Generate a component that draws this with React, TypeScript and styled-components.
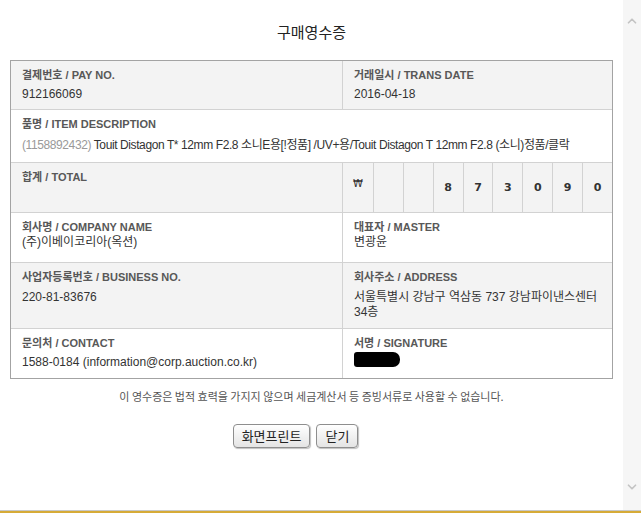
import React from 'react';
import styled, { createGlobalStyle } from 'styled-components';
import { ChevronUp, ChevronDown } from 'lucide-react';

const GlobalStyle = createGlobalStyle`
  html, body {
    margin: 0;
    padding: 0;
    background: #fff;
  }
  body {
    font-family: "Liberation Sans", "Noto Sans CJK KR", sans-serif;
    color: #333;
  }
`;

const Frame = styled.div`
  width: 641px;
  height: 513px;
  display: flex;
  flex-direction: column;
  overflow: hidden;
`;

const Viewport = styled.div`
  flex: 1;
  display: flex;
  min-height: 0;
`;

const Content = styled.main`
  width: 623px;
  padding: 22px 10px 0 10px;
  box-sizing: border-box;
`;

const Title = styled.h1`
  margin: 0 0 18px;
  font-size: 15px;
  line-height: 20px;
  font-weight: normal;
  text-align: center;
  color: #222;
  font-family: "Noto Sans CJK KR", sans-serif;
`;

const Receipt = styled.section`
  border: 1px solid #a3a3a3;
`;

const Row = styled.div<{ $shaded?: boolean; $h: number }>`
  display: grid;
  grid-template-columns: 332px 1fr;
  height: ${({ $h }) => $h}px;
  background: ${({ $shaded }) => ($shaded ? '#f3f3f3' : '#fff')};
  & + & {
    border-top: 1px solid #d2d2d2;
  }
  & > *:first-child {
    border-right: 1px solid #d2d2d2;
  }
`;

const Cell = styled.div<{ $wide?: boolean }>`
  padding: 6px 11px;
  box-sizing: border-box;
  min-width: 0;
  ${({ $wide }) => $wide && 'grid-column: 1 / -1; border-right: none !important;'}
`;

const Label = styled.div`
  font-size: 11px;
  line-height: 16px;
  font-weight: bold;
  color: #585858;
  white-space: nowrap;
`;

const Value = styled.div<{ $gap?: number }>`
  margin-top: ${({ $gap }) => $gap ?? 4}px;
  font-size: 12px;
  line-height: 15px;
  color: #333;
  white-space: nowrap;
`;

const ItemText = styled(Value)`
  letter-spacing: -0.4px;
`;

const ItemCode = styled.span`
  color: #999;
`;

const AmountGrid = styled.div`
  display: grid;
  grid-template-columns: repeat(9, 1fr);
`;

const AmountCell = styled.div<{ $currency?: boolean }>`
  display: flex;
  align-items: center;
  justify-content: center;
  font-family: "DejaVu Sans", sans-serif;
  font-size: ${({ $currency }) => ($currency ? '10px' : '11px')};
  font-weight: ${({ $currency }) => ($currency ? 'normal' : 'bold')};
  color: #333;
  padding-bottom: ${({ $currency }) => ($currency ? '8px' : '0')};
  & + & {
    border-left: 1px solid #d2d2d2;
  }
`;

const Redacted = styled.div`
  margin-top: 1px;
  width: 46px;
  height: 15px;
  background: #000;
  border-radius: 3px 7px 7px 3px;
`;

const Notice = styled.p`
  margin: 10px 0 0;
  font-size: 11px;
  line-height: 14px;
  text-align: center;
  color: #555;
  font-family: "Noto Sans CJK KR", sans-serif;
`;

const ButtonBar = styled.div`
  display: flex;
  justify-content: center;
  gap: 6px;
  margin-top: 21px;
  padding-right: 32px;
`;

const Button = styled.button`
  height: 24px;
  padding: 0 8px;
  border: 1px solid #8e8e8e;
  border-radius: 4px;
  background: linear-gradient(#ffffff, #e4e4e4);
  box-shadow: 1px 1px 1px rgba(0, 0, 0, 0.25);
  font-family: "Noto Sans CJK KR", sans-serif;
  font-size: 13px;
  line-height: 20px;
  color: #222;
  cursor: pointer;
`;

const Scrollbar = styled.aside`
  width: 18px;
  background: #f6f6f6;
  display: flex;
  flex-direction: column;
  justify-content: space-between;
  align-items: center;
  padding: 14px 0 16px;
  box-sizing: border-box;
  color: #c4c4c4;
`;

const GrayRule = styled.div`
  height: 1px;
  background: #c8c8c8;
`;

const GoldRule = styled.div`
  height: 2px;
  background: #d6ab37;
`;

const amount = ['₩', '', '', '8', '7', '3', '0', '9', '0'];

export default function App() {
  return (
    <Frame>
      <GlobalStyle />
      <Viewport>
        <Content>
          <Title>구매영수증</Title>
          <Receipt>
            <Row $shaded $h={48}>
              <Cell>
                <Label>결제번호 / PAY NO.</Label>
                <Value>912166069</Value>
              </Cell>
              <Cell>
                <Label>거래일시 / TRANS DATE</Label>
                <Value>2016-04-18</Value>
              </Cell>
            </Row>
            <Row $h={52}>
              <Cell $wide>
                <Label>품명 / ITEM DESCRIPTION</Label>
                <ItemText $gap={6}>
                  <ItemCode>(1158892432)</ItemCode> Touit Distagon T* 12mm F2.8 소니E용[!정품] /UV+용/Touit Distagon T 12mm F2.8 (소니)정품/클락
                </ItemText>
              </Cell>
            </Row>
            <Row $shaded $h={49}>
              <Cell>
                <Label>합계 / TOTAL</Label>
              </Cell>
              <AmountGrid>
                {amount.map((d, i) => (
                  <AmountCell key={i} $currency={i === 0}>
                    {d}
                  </AmountCell>
                ))}
              </AmountGrid>
            </Row>
            <Row $h={49}>
              <Cell>
                <Label>회사명 / COMPANY NAME</Label>
                <Value $gap={0}>(주)이베이코리아(옥션)</Value>
              </Cell>
              <Cell>
                <Label>대표자 / MASTER</Label>
                <Value $gap={0}>변광윤</Value>
              </Cell>
            </Row>
            <Row $shaded $h={65}>
              <Cell>
                <Label>사업자등록번호 / BUSINESS NO.</Label>
                <Value $gap={5}>220-81-83676</Value>
              </Cell>
              <Cell>
                <Label>회사주소 / ADDRESS</Label>
                <Value $gap={5}>
                  서울특별시 강남구 역삼동 737 강남파이낸스센터
                  <br />
                  34층
                </Value>
              </Cell>
            </Row>
            <Row $h={49}>
              <Cell>
                <Label>문의처 / CONTACT</Label>
                <Value $gap={4}>1588-0184 (information@corp.auction.co.kr)</Value>
              </Cell>
              <Cell>
                <Label>서명 / SIGNATURE</Label>
                <Redacted />
              </Cell>
            </Row>
          </Receipt>
          <Notice>이 영수증은 법적 효력을 가지지 않으며 세금계산서 등 증빙서류로 사용할 수 없습니다.</Notice>
          <ButtonBar>
            <Button type="button">화면프린트</Button>
            <Button type="button">닫기</Button>
          </ButtonBar>
        </Content>
        <Scrollbar>
          <ChevronUp size={14} strokeWidth={3} />
          <ChevronDown size={14} strokeWidth={3} />
        </Scrollbar>
      </Viewport>
      <GrayRule />
      <GoldRule />
    </Frame>
  );
}
